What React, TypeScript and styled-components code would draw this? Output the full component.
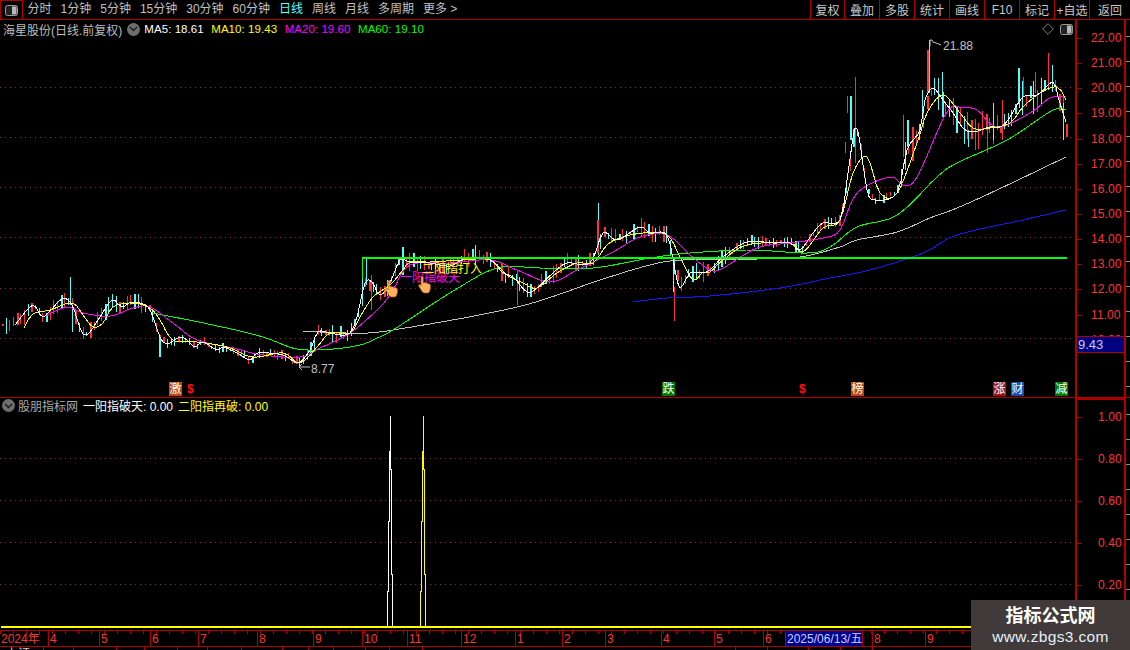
import React from "react";
import styled, { createGlobalStyle } from "styled-components";

const Global = createGlobalStyle`
  html, body { margin: 0; padding: 0; background: #000; overflow: hidden; }
  * { box-sizing: border-box; }
`;

const RED_LINE = "#b00000";
const LABEL_RED = "#ff3232";
const FONT = `"Liberation Sans", "Noto Sans CJK SC", sans-serif`;

const Page = styled.div`
  width: 1130px;
  height: 650px;
  background: #000;
  display: flex;
  flex-direction: column;
  overflow: hidden;
  position: relative;
  font-family: ${FONT};
  font-size: 12px;
  color: #c0c0c0;
`;
const Toolbar = styled.div`
  height: 20px;
  flex: none;
  display: flex;
  align-items: stretch;
  border-bottom: 1px solid ${RED_LINE};
`;
const LayoutToggle = styled.div`
  width: 23px;
  border: 1px solid ${RED_LINE};
  border-bottom: 0;
  display: flex;
  align-items: center;
  justify-content: center;
`;
const PeriodList = styled.div`
  display: flex;
  align-items: center;
  gap: 9px;
  padding-left: 4.5px;
  flex: 1;
`;
const Period = styled.span<{ $active?: boolean }>`
  color: ${(p) => (p.$active ? "#54ffff" : "#c0c0c0")};
  line-height: 19px;
  white-space: nowrap;
`;
const ToolGroup = styled.div`
  display: flex;
  align-items: stretch;
`;
const ToolCell = styled.div<{ $w?: number }>`
  width: ${(p) => p.$w ?? 35}px;
  border-left: 1px solid ${RED_LINE};
  display: flex;
  align-items: center;
  justify-content: center;
  white-space: nowrap;
  color: #c8c8c8;
`;
const PaneRow = styled.div<{ $h: number; $ruled?: boolean }>`
  height: ${(p) => p.$h}px;
  flex: none;
  display: flex;
  border-top: ${(p) => (p.$ruled ? `1px solid ${RED_LINE}` : "0")};
`;
const ChartPane = styled.div`
  width: 1075px;
  flex: none;
  position: relative;
  overflow: hidden;
`;
const ChartSvg = styled.svg`
  position: absolute;
  left: 0;
  top: 0;
  display: block;
`;
const PaneHeader = styled.div<{ $h: number; $left: number }>`
  position: relative;
  height: ${(p) => p.$h}px;
  display: flex;
  align-items: center;
  padding-left: ${(p) => p.$left}px;
  white-space: nowrap;
`;
const StockName = styled.span`
  color: #bdbdbd;
  margin-right: 5px;
`;
const RoundToggle = styled.span<{ $after: number }>`
  width: 13px;
  height: 13px;
  border-radius: 50%;
  background: #6e6e6e;
  margin-right: ${(p) => p.$after}px;
  flex: none;
  display: flex;
  align-items: center;
  justify-content: center;
`;
const MaValue = styled.span<{ $color: string }>`
  color: ${(p) => p.$color};
  font-size: 11.5px;
  letter-spacing: 0.06px;
  margin-right: 7.5px;
`;
const IndicatorValue = styled.span<{ $color: string }>`
  color: ${(p) => p.$color};
  margin-right: 5px;
`;
const Axis = styled.div`
  width: 51px;
  flex: none;
  position: relative;
  border-left: 2px solid ${RED_LINE};
  border-right: 2px solid ${RED_LINE};
  overflow: hidden;
`;
const AxisStack = styled.div<{ $top: number }>`
  margin-top: ${(p) => p.$top}px;
  display: flex;
  flex-direction: column;
`;
const AxisLabel = styled.div<{ $h: number; $pad: number }>`
  height: ${(p) => p.$h}px;
  flex: none;
  display: flex;
  align-items: center;
  position: relative;
  padding-left: ${(p) => p.$pad}px;
  color: ${LABEL_RED};
  letter-spacing: 0.1px;
  &::before {
    content: "";
    position: absolute;
    left: 0;
    top: 50%;
    width: 5px;
    height: 1px;
    background: ${RED_LINE};
  }
`;
const PriceBox = styled.div`
  position: absolute;
  left: 0;
  right: 0;
  top: 316px;
  height: 17px;
  background: #000080;
  border-top: 1px solid ${RED_LINE};
  border-bottom: 1px solid ${RED_LINE};
  color: #c8c8ff;
  display: flex;
  align-items: center;
  padding-left: 1px;
  font-size: 13px;
`;
const AxisCap = styled.div`
  position: absolute;
  left: 0;
  right: 0;
  top: 0;
  height: 2px;
  background: ${RED_LINE};
`;
const EdgeStrip = styled.div`
  width: 4px;
  flex: none;
  background: repeating-linear-gradient(180deg, transparent 0 16px, #8a8a8a 16px 17px, transparent 17px 25px);
`;
const ChartLabel = styled.span<{ $x: number; $y: number; $color: string }>`
  position: absolute;
  left: ${(p) => p.$x}px;
  top: ${(p) => p.$y}px;
  color: ${(p) => p.$color};
  font-size: 12px;
  line-height: 14px;
  white-space: nowrap;
`;
const SignalBadge = styled.span<{ $x: number; $bg: string }>`
  position: absolute;
  left: ${(p) => p.$x}px;
  top: 362px;
  width: 13px;
  height: 14px;
  background: ${(p) => p.$bg};
  color: #fff;
  font-size: 12px;
  line-height: 14px;
  text-align: center;
  overflow: hidden;
`;
const DollarMark = styled.span<{ $x: number }>`
  position: absolute;
  left: ${(p) => p.$x}px;
  top: 362px;
  color: #ff1010;
  font-size: 12px;
  font-weight: 700;
  line-height: 15px;
`;
const HandMark = styled.svg<{ $x: number; $y: number }>`
  position: absolute;
  left: ${(p) => p.$x}px;
  top: ${(p) => p.$y}px;
`;
const PaneTools = styled.div`
  position: absolute;
  right: 2px;
  top: 3px;
  display: flex;
  align-items: center;
  gap: 6px;
`;
const TimeAxis = styled.div`
  height: 17px;
  flex: none;
  display: flex;
  border-top: 1px solid ${RED_LINE};
  border-bottom: 1px solid ${RED_LINE};
  background: repeating-linear-gradient(90deg, ${RED_LINE} 0 1px, transparent 1px 13px) top left / 100% 3px no-repeat;
`;
const TimeCell = styled.div<{ $w: number }>`
  width: ${(p) => p.$w}px;
  flex: none;
  border-left: 1px solid ${RED_LINE};
  color: ${LABEL_RED};
  padding-left: 1px;
  line-height: 16px;
  white-space: nowrap;
  &:first-child { border-left: 0; }
`;
const DateCell = styled.div`
  width: 77px;
  flex: none;
  background: #000090;
  border-left: 1px solid ${RED_LINE};
  color: #c8d0ff;
  line-height: 16px;
  padding-left: 1px;
  white-space: nowrap;
`;
const StatusStrip = styled.div`
  height: 3px;
  flex: none;
  display: flex;
  overflow: hidden;
`;
const StatusCell = styled.div<{ $w: number }>`
  width: ${(p) => p.$w}px;
  flex: none;
  border-right: 1px solid ${RED_LINE};
  color: #d0d0d0;
  line-height: 14px;
  padding-left: 6px;
  white-space: nowrap;
`;
const Watermark = styled.div`
  position: absolute;
  left: 971px;
  top: 600px;
  width: 159px;
  height: 50px;
  background: #403a3a;
  display: flex;
  flex-direction: column;
  align-items: center;
  justify-content: center;
  gap: 1px;
  color: #fff;
`;
const WatermarkTitle = styled.div`
  font-size: 18px;
  font-weight: 700;
  line-height: 22px;
`;
const WatermarkUrl = styled.div`
  font-size: 15.5px;
  line-height: 18px;
  color: #e6f0ff;
  letter-spacing: 0.35px;
`;

type P = [number, number];
const ma5: P[] = [[15,325],[33,305],[43,317],[62,299],[72,305],[80,328],[87,335],[100,317],[112,300],[122,307],[132,302],[147,306],[153,317],[160,337],[167,344],[180,337],[187,340],[195,347],[203,342],[217,350],[223,347],[237,353],[250,360],[258,353],[283,355],[298,363],[310,350],[318,332],[330,333],[340,335],[350,333],[357,317],[365,283],[372,282],[380,295],[390,283],[400,260],[410,262],[430,263],[450,266],[467,258],[490,260],[503,273],[513,277],[527,292],[537,288],[553,273],[567,263],[590,263],[603,233],[617,240],[640,227],[650,233],[667,235],[675,270],[680,288],[690,273],[700,273],[710,270],[723,257],[747,242],[773,243],[790,243],[800,250],[813,233],[823,223],[840,220],[847,180],[855,128],[860,143],[867,190],[875,200],[897,193],[907,150],[920,130],[925,100],[933,88],[943,100],[953,113],[963,128],[973,132],[990,127],[1000,127],[1008,120],[1023,97],[1037,95],[1053,82],[1058,97],[1066,122]];
const ma10: P[] = [[24,328],[33,314],[50,310],[72,303],[83,315],[93,327],[103,323],[113,307],[133,303],[150,308],[160,320],[173,340],[197,342],[227,347],[253,357],[283,353],[300,363],[317,347],[330,333],[350,333],[360,317],[373,297],[390,285],[403,270],[410,262],[430,262],[463,260],[490,260],[507,275],[523,283],[537,288],[557,273],[577,263],[593,263],[607,245],[620,238],[643,233],[667,235],[680,257],[693,280],[703,272],[710,272],[723,260],[747,245],[790,243],[803,252],[823,228],[840,220],[853,173],[867,157],[880,193],[897,193],[917,143],[927,113],[943,95],[960,113],[973,128],[990,128],[1010,123],[1023,107],[1040,93],[1057,87],[1066,100]];
const ma20: P[] = [[43,317],[67,307],[83,313],[110,316],[133,308],[150,307],[173,323],[197,340],[233,348],[263,355],[300,357],[320,348],[350,333],[380,307],[393,290],[410,265],[450,263],[490,260],[517,270],[550,282],[577,270],[613,252],[640,237],[667,235],[690,255],[710,270],[723,268],[757,248],[790,243],[823,238],[840,230],[857,193],[890,177],[903,185],[917,177],[947,112],[963,108],[977,110],[997,127],[1030,113],[1050,98],[1066,97]];
const ma60: P[] = [[153,313],[213,325],[263,337],[297,349],[333,349],[360,345],[375,339],[393,330],[450,293],[497,268],[540,268],[593,268],[650,258],[690,253],[750,250],[807,253],[830,247],[857,227],[897,215],[937,177],[957,163],[1007,140],[1053,110],[1066,110]];
const ma120: P[] = [[303,331],[350,333],[393,330],[517,307],[600,280],[650,265],[683,260],[757,259],[800,257],[840,247],[857,240],[897,232],[930,218],[957,208],[997,190],[1066,157]];
const ma250: P[] = [[633,302],[667,298],[710,296],[780,288],[830,278],[870,270],[923,253],[957,235],[1023,220],[1066,210]];

const smooth = (a: P[]): P[] => {
  const out: P[] = [a[0]];
  for (let i = 0; i < a.length - 1; i++) {
    const p0 = a[Math.max(i - 1, 0)];
    const p1 = a[i];
    const p2 = a[i + 1];
    const p3 = a[Math.min(i + 2, a.length - 1)];
    const n = Math.max(1, Math.ceil((p2[0] - p1[0]) / 3.67));
    for (let k = 1; k <= n; k++) {
      const t = k / n;
      const u = (v0: number, v1: number, v2: number, v3: number) =>
        0.5 * (2 * v1 + (v2 - v0) * t + (2 * v0 - 5 * v1 + 4 * v2 - v3) * t * t + (3 * v1 - v0 - 3 * v2 + v3) * t * t * t);
      out.push([u(p0[0], p1[0], p2[0], p3[0]), u(p0[1], p1[1], p2[1], p3[1])]);
    }
  }
  return out;
};
const pts = (a: P[]) => smooth(a).map((p) => `${p[0].toFixed(1)},${p[1].toFixed(1)}`).join(" ");
const interp = (a: P[], x: number) => {
  if (x <= a[0][0]) return a[0][1];
  for (let i = 1; i < a.length; i++) {
    if (x <= a[i][0]) {
      const t = (x - a[i - 1][0]) / (a[i][0] - a[i - 1][0]);
      return a[i - 1][1] + t * (a[i][1] - a[i - 1][1]);
    }
  }
  return a[a.length - 1][1];
};

const CANDLE_RED = "#ff3232";
const CANDLE_CYAN = "#54fcfc";
type Candle = { x: number; t: number; b: number; c: string };
let seed = 12345;
const rnd = () => {
  seed = (seed * 1664525 + 1013904223) % 4294967296;
  return seed / 4294967296;
};
const buildCandles = (): Candle[] => {
  const out: Candle[] = [];
  for (let x = 2; x < 1066; x += 3.67) {
    const y = interp(ma5, x);
    let amp = 9;
    if (x > 150) amp = 5;
    if (x > 300) amp = 9;
    if (x > 730 && x < 845) amp = 6;
    if (x > 860 && x < 900) amp = 5;
    if (x >= 900) amp = 18;
    const t = y - 1 - rnd() * amp;
    const b = y + 1 + rnd() * amp;
    out.push({ x: Math.round(x), t, b, c: rnd() > 0.5 ? CANDLE_RED : CANDLE_CYAN });
  }
  const extra: [number, number, number, string][] = [
    [70,277,305,CANDLE_CYAN],[72,305,332,CANDLE_CYAN],[159,337,357,CANDLE_CYAN],[362,258,300,CANDLE_CYAN],[366,258,285,CANDLE_CYAN],[371,275,310,CANDLE_RED],[402,247,275,CANDLE_CYAN],[475,245,265,CANDLE_CYAN],[517,270,305,CANDLE_RED],[598,203,255,CANDLE_CYAN],[597,220,253,CANDLE_RED],[673,257,292,CANDLE_CYAN],[674,287,321,CANDLE_RED],
    [855,77,163,CANDLE_RED],[850,96,140,CANDLE_CYAN],[847,96,113,CANDLE_RED],[845,142,153,CANDLE_RED],[929,40,93,CANDLE_CYAN],[927,50,93,CANDLE_RED],[942,72,110,CANDLE_CYAN],[922,90,113,CANDLE_CYAN],[903,115,157,CANDLE_RED],[907,120,147,CANDLE_CYAN],[968,130,147,CANDLE_CYAN],[987,130,153,CANDLE_RED],[1048,53,87,CANDLE_RED],[1018,68,103,CANDLE_CYAN],[1035,72,93,CANDLE_RED],[1052,65,83,CANDLE_CYAN],[1063,103,140,CANDLE_CYAN],[1066,124,137,CANDLE_RED],[1023,77,97,CANDLE_RED],[1002,100,140,CANDLE_RED],[993,103,140,CANDLE_CYAN],
  ];
  extra.forEach(([x, t, b, c]) => out.push({ x, t, b, c }));
  return out;
};
const candles = buildCandles();

const pulse = (o: number) =>
  `${o + 387.5},626 ${o + 387.5},591 ${o + 388.5},591 ${o + 388.5},521 ${o + 389.5},521 ${o + 389.5},451 ${o + 390.5},451 ${o + 390.5},416 ${o + 390.5},469 ${o + 391.5},469 ${o + 391.5},574 ${o + 392.5},574 ${o + 392.5},626`;

const PanelGlyph = () => (
  <svg width="13" height="11" viewBox="0 0 13 11">
    <rect x="0.5" y="0.5" width="12" height="10" rx="2" fill="#222" stroke="#9a9a9a" />
    <rect x="7" y="1.5" width="4.5" height="8" fill="#b8b8b8" />
  </svg>
);
const Chevron = () => (
  <svg width="9" height="6" viewBox="0 0 9 6">
    <path d="M1 1l3.5 3.5L8 1" fill="none" stroke="#1c1c1c" strokeWidth="1.4" />
  </svg>
);
const Hand = ({ x, y }: { x: number; y: number }) => (
  <HandMark $x={x} $y={y - 20} width="14" height="18" viewBox="0 0 14 18">
    <path
      d="M3 1.5c0-1.4 2.2-1.4 2.2 0V7l1-.4c.8-.3 1.3 0 1.5.5.8-.4 1.4-.2 1.7.4.9-.3 1.5 0 1.8.7.8-.1 1.3.3 1.3 1.2 0 2.4-.2 4.4-1 6.1-.4 1-1.3 1.5-2.4 1.5H6.4c-1 0-1.8-.5-2.3-1.4L.8 10.200c-.7-1.200.8-2.400 1.800-1.300L3 9.500z"
      fill="#ffb05a"
      stroke="#a85a12"
      strokeWidth="0.7"
    />
  </HandMark>
);

const periods = ["分时", "1分钟", "5分钟", "15分钟", "30分钟", "60分钟", "日线", "周线", "月线", "多周期", "更多 >"];
const tools: [string, number][] = [["复权",34],["叠加",35],["多股",35],["统计",35],["画线",35],["F10",35],["标记",35],["+自选",35],["返回",41]];
const prices = ["22.00","21.00","20.00","19.00","18.00","17.00","16.00","15.00","14.00","13.00","12.00","11.00","10.00"];
const ratios = ["1.00","0.80","0.60","0.40","0.20"];
const timeCells: [string, number][] = [["2024年",48],["4",51],["5",51],["6",48],["7",59],["8",56],["9",49],["10",45],["11",54],["12",54],["1",47],["2",43],["3",56],["4",53],["5",49],["6",22]];
const timeCellsAfter: [string, number][] = [["",10],["8",53],["9",60],["",145]];
const statusWidths = [44,30,43,28,33,30,34,41,26,25,32,24,33,313,32,41,32,32,258];
const dots = [87,137,187,237,288,338];
const lowerDots = [458,500,542,584];

export default function App() {
  return (
    <Page>
      <Global />
      <Toolbar>
        <LayoutToggle><PanelGlyph /></LayoutToggle>
        <PeriodList>
          {periods.map((p) => (
            <Period key={p} $active={p === "日线"}>{p}</Period>
          ))}
        </PeriodList>
        <ToolGroup>
          {tools.map(([t, w]) => (
            <ToolCell key={t} $w={w}>{t}</ToolCell>
          ))}
        </ToolGroup>
      </Toolbar>

      <PaneRow $h={377}>
        <ChartPane>
          <ChartSvg width="1075" height="377" viewBox="0 20 1075 377">
            {dots.map((y) => (
              <line key={y} x1="0" x2="1075" y1={y + 0.5} y2={y + 0.5} stroke="#a82020" strokeDasharray="1 4" />
            ))}
            <g shapeRendering="crispEdges">
              {candles.map((c, i) => (
                <rect key={i} x={c.x} y={c.t} width={i % 4 === 0 ? 2 : 1} height={c.b - c.t} fill={c.c} />
              ))}
              <polyline points={pts(ma250)} fill="none" stroke="#1414ff" />
              <polyline points={pts(ma120)} fill="none" stroke="#c0c0c0" />
              <polyline points={pts(ma60)} fill="none" stroke="#00ff00" />
              <polyline points={pts(ma20)} fill="none" stroke="#ff00ff" />
              <polyline points={pts(ma10)} fill="none" stroke="#ffff00" />
              <polyline points={pts(ma5)} fill="none" stroke="#ffffff" />
              <rect x="362" y="257" width="705" height="2" fill="#00ff00" />
              <rect x="362" y="257" width="1" height="22" fill="#00ff00" />
            </g>
            <path d="M930 46V40h2l1 2 3 1 5 2" fill="none" stroke="#c0c0c0" />
            <path d="M310 367h-11m3-3l-3 3 3 3" fill="none" stroke="#c0c0c0" />
          </ChartSvg>
          <PaneHeader $h={18} $left={3}>
            <StockName>海星股份(日线.前复权)</StockName>
            <RoundToggle $after={4}><Chevron /></RoundToggle>
            <MaValue $color="#ffffff">MA5: 18.61</MaValue>
            <MaValue $color="#ffff00">MA10: 19.43</MaValue>
            <MaValue $color="#ff00ff">MA20: 19.60</MaValue>
            <MaValue $color="#00ff00">MA60: 19.10</MaValue>
          </PaneHeader>
          <PaneTools>
            <svg width="12" height="12" viewBox="0 0 12 12">
              <path d="M6 .7L11.300 6 6 11.300.7 6z" fill="none" stroke="#808080" />
            </svg>
            <PanelGlyph />
          </PaneTools>
          <ChartLabel $x={943} $y={19} $color="#c0c0c0">21.88</ChartLabel>
          <ChartLabel $x={311} $y={342} $color="#c0c0c0">8.77</ChartLabel>
          <ChartLabel $x={400} $y={251} $color="#ff00ff">一阳指破天</ChartLabel>
          <ChartLabel $x={422} $y={242} $color="#ffff00">二阳指打入</ChartLabel>
          <Hand x={385} y={280} />
          <Hand x={418} y={276} />
          <SignalBadge $x={169} $bg="#b84a14">激</SignalBadge>
          <DollarMark $x={187}>$</DollarMark>
          <SignalBadge $x={662} $bg="#007a00">跌</SignalBadge>
          <DollarMark $x={799}>$</DollarMark>
          <SignalBadge $x={851} $bg="#b84a14">榜</SignalBadge>
          <SignalBadge $x={993} $bg="#a01818">涨</SignalBadge>
          <SignalBadge $x={1011} $bg="#1450b4">财</SignalBadge>
          <SignalBadge $x={1055} $bg="#007a00">减</SignalBadge>
        </ChartPane>
        <Axis>
          <AxisStack $top={5.4}>
            {prices.map((p) => (
              <AxisLabel key={p} $h={25.15} $pad={14}>{p}</AxisLabel>
            ))}
          </AxisStack>
          <PriceBox>9.43</PriceBox>
        </Axis>
        <EdgeStrip />
      </PaneRow>

      <PaneRow $h={233} $ruled>
        <ChartPane>
          <ChartSvg width="1075" height="232" viewBox="0 398 1075 232">
            {lowerDots.map((y) => (
              <line key={y} x1="0" x2="1075" y1={y + 0.5} y2={y + 0.5} stroke="#a82020" strokeDasharray="1 4" />
            ))}
            <g shapeRendering="crispEdges">
              <polyline points={pulse(0)} fill="none" stroke="#ffffff" />
              <polyline points={pulse(33)} fill="none" stroke="#ffff00" />
              <rect x="1" y="626" width="1074" height="2" fill="#ffff00" />
            </g>
          </ChartSvg>
          <PaneHeader $h={15} $left={2}>
            <RoundToggle $after={3}><Chevron /></RoundToggle>
            <IndicatorValue $color="#a8a8a8">股朋指标网</IndicatorValue>
            <IndicatorValue $color="#ffffff">一阳指破天: 0.00</IndicatorValue>
            <IndicatorValue $color="#ffff00">二阳指再破: 0.00</IndicatorValue>
          </PaneHeader>
        </ChartPane>
        <Axis>
          <AxisCap />
          <AxisStack $top={-2}>
            {ratios.map((r) => (
              <AxisLabel key={r} $h={42} $pad={21}>{r}</AxisLabel>
            ))}
          </AxisStack>
        </Axis>
        <EdgeStrip />
      </PaneRow>

      <TimeAxis>
        {timeCells.map(([t, w], i) => (
          <TimeCell key={i} $w={w}>{t}</TimeCell>
        ))}
        <DateCell>2025/06/13/五</DateCell>
        {timeCellsAfter.map(([t, w], i) => (
          <TimeCell key={i} $w={w}>{t}</TimeCell>
        ))}
      </TimeAxis>
      <StatusStrip>
        {statusWidths.map((w, i) => (
          <StatusCell key={i} $w={w}>{i === 0 ? "上证" : ""}</StatusCell>
        ))}
      </StatusStrip>

      <Watermark>
        <WatermarkTitle>指标公式网</WatermarkTitle>
        <WatermarkUrl>www.zbgs3.com</WatermarkUrl>
      </Watermark>
    </Page>
  );
}
